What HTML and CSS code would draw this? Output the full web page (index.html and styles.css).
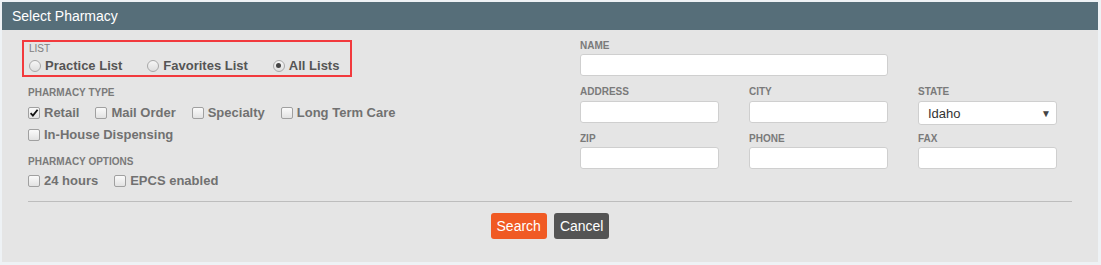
FILE: index.html
```html
<!DOCTYPE html>
<html>
<head>
<meta charset="utf-8">
<link rel="stylesheet" href="styles.css">
</head>
<body>
<div class="panel">
  <div class="panel-header">Select Pharmacy</div>
  <div class="panel-body">
    <div class="columns">
      <div class="col-left">
        <div class="list-group">
          <div class="cap-label">LIST</div>
          <div class="radio-row">
            <label class="opt radio-opt"><span class="radio"></span>Practice List</label>
            <label class="opt radio-opt"><span class="radio"></span>Favorites List</label>
            <label class="opt radio-opt"><span class="radio checked"></span>All Lists</label>
          </div>
        </div>
        <div class="cap-label sect">PHARMACY TYPE</div>
        <div class="check-row first">
          <label class="opt"><span class="cb checked"><svg viewBox="0 0 12 12" width="12" height="12"><path d="M2.6 6.2 L4.9 8.6 L9.6 2.8" fill="none" stroke="#111" stroke-width="1.8"/></svg></span>Retail</label>
          <label class="opt"><span class="cb"></span>Mail Order</label>
          <label class="opt"><span class="cb"></span>Specialty</label>
          <label class="opt"><span class="cb"></span>Long Term Care</label>
        </div>
        <div class="check-row">
          <label class="opt"><span class="cb"></span>In-House Dispensing</label>
        </div>
        <div class="cap-label sect2">PHARMACY OPTIONS</div>
        <div class="check-row last">
          <label class="opt"><span class="cb"></span>24 hours</label>
          <label class="opt"><span class="cb"></span>EPCS enabled</label>
        </div>
      </div>
      <div class="col-right">
        <div class="field wide">
          <div class="cap-label">NAME</div>
          <div class="input"></div>
        </div>
        <div class="field-row">
          <div class="field">
            <div class="cap-label">ADDRESS</div>
            <div class="input"></div>
          </div>
          <div class="field">
            <div class="cap-label">CITY</div>
            <div class="input"></div>
          </div>
          <div class="field">
            <div class="cap-label">STATE</div>
            <div class="input select"><span>Idaho</span><span class="arrow">&#9660;</span></div>
          </div>
        </div>
        <div class="field-row">
          <div class="field">
            <div class="cap-label">ZIP</div>
            <div class="input"></div>
          </div>
          <div class="field">
            <div class="cap-label">PHONE</div>
            <div class="input"></div>
          </div>
          <div class="field">
            <div class="cap-label">FAX</div>
            <div class="input"></div>
          </div>
        </div>
      </div>
    </div>
    <div class="divider"></div>
    <div class="actions">
      <button class="btn btn-search">Search</button>
      <button class="btn btn-cancel">Cancel</button>
    </div>
  </div>
</div>
</body>
</html>
```

FILE: styles.css
```css
html, body {
  margin: 0;
  padding: 0;
}
body {
  background: #eef2f5;
  font-family: "Liberation Sans", Arial, sans-serif;
  width: 1101px;
  height: 265px;
  overflow: hidden;
}
.panel {
  margin: 2px 3px 0 2px;
  background: #e5e5e5;
  height: 260px;
}
.panel-header {
  height: 28px;
  line-height: 28px;
  background: #566e79;
  color: #fff;
  font-size: 14px;
  padding-left: 10px;
}
.panel-body {
  padding: 10px 26px 0 26px;
}
.columns {
  display: grid;
  grid-template-columns: 552px 1fr;
  align-items: start;
}
.cap-label {
  font-size: 10px;
  font-weight: bold;
  color: #7a7a7a;
  line-height: 12px;
}
.list-group {
  display: inline-block;
  border: 2px solid #f23a3d;
  margin-left: -6px;
  padding: 1px 11px 0 5px;
}
.list-group .cap-label {
  font-weight: normal;
  color: #808080;
}
.radio-row {
  display: flex;
  gap: 25px;
  height: 19px;
  margin-top: 1px;
}
.opt {
  display: flex;
  align-items: center;
  gap: 4px;
  font-size: 13px;
  font-weight: bold;
  color: #717171;
  line-height: 20px;
  white-space: nowrap;
}
.radio-opt {
  color: #555;
}
.radio {
  width: 10px;
  height: 10px;
  border: 1px solid #a8a8a8;
  border-radius: 50%;
  background: linear-gradient(#f6f6f6, #dedede);
  display: flex;
  align-items: center;
  justify-content: center;
  flex: none;
}
.radio.checked::after {
  content: "";
  width: 5px;
  height: 5px;
  border-radius: 50%;
  background: #444;
}
.sect {
  margin-top: 10px;
}
.sect2 {
  margin-top: 11px;
}
.check-row {
  display: flex;
  gap: 16px;
  height: 20px;
  margin-top: 2px;
}
.check-row.first {
  margin-top: 4px;
}
.check-row.last {
  margin-top: 3px;
}
.cb {
  width: 10px;
  height: 10px;
  border: 1px solid #a0a0a0;
  border-radius: 2px;
  background: linear-gradient(#fafafa, #e2e2e2);
  flex: none;
  position: relative;
}
.cb svg {
  position: absolute;
  left: -1px;
  top: -1px;
}
.col-right {
  display: flex;
  flex-direction: column;
}
.field .cap-label {
  margin-bottom: 3px;
}
.field.wide .cap-label {
  margin-bottom: 2px;
}
.field.wide .input {
  width: 306px;
}
.field-row {
  display: grid;
  grid-template-columns: 139px 139px 139px;
  column-gap: 30px;
  align-items: start;
  height: 37px;
  margin-top: 10px;
}
.field-row + .field-row {
  margin-top: 10px;
}
.field-row + .field-row .cap-label {
  margin-bottom: 2px;
}
.input {
  height: 20px;
  background: #fff;
  border: 1px solid #cfcfcf;
  border-radius: 3px;
}
.select {
  height: 22px;
  display: flex;
  align-items: center;
  justify-content: space-between;
  padding: 0 5px 0 9px;
  font-size: 13px;
  color: #333;
}
.arrow {
  font-size: 10px;
  color: #444;
}
.divider {
  height: 1px;
  background: #bdbdbd;
  margin-top: 10px;
}
.actions {
  display: flex;
  justify-content: center;
  gap: 7px;
  margin-top: 11px;
}
.btn {
  height: 26px;
  border: none;
  border-radius: 3px;
  color: #fff;
  font-family: "Liberation Sans", Arial, sans-serif;
  font-size: 14px;
  padding: 0 6px;
  line-height: 26px;
}
.btn-search {
  background: #f05a24;
}
.btn-cancel {
  background: #545454;
}
```
